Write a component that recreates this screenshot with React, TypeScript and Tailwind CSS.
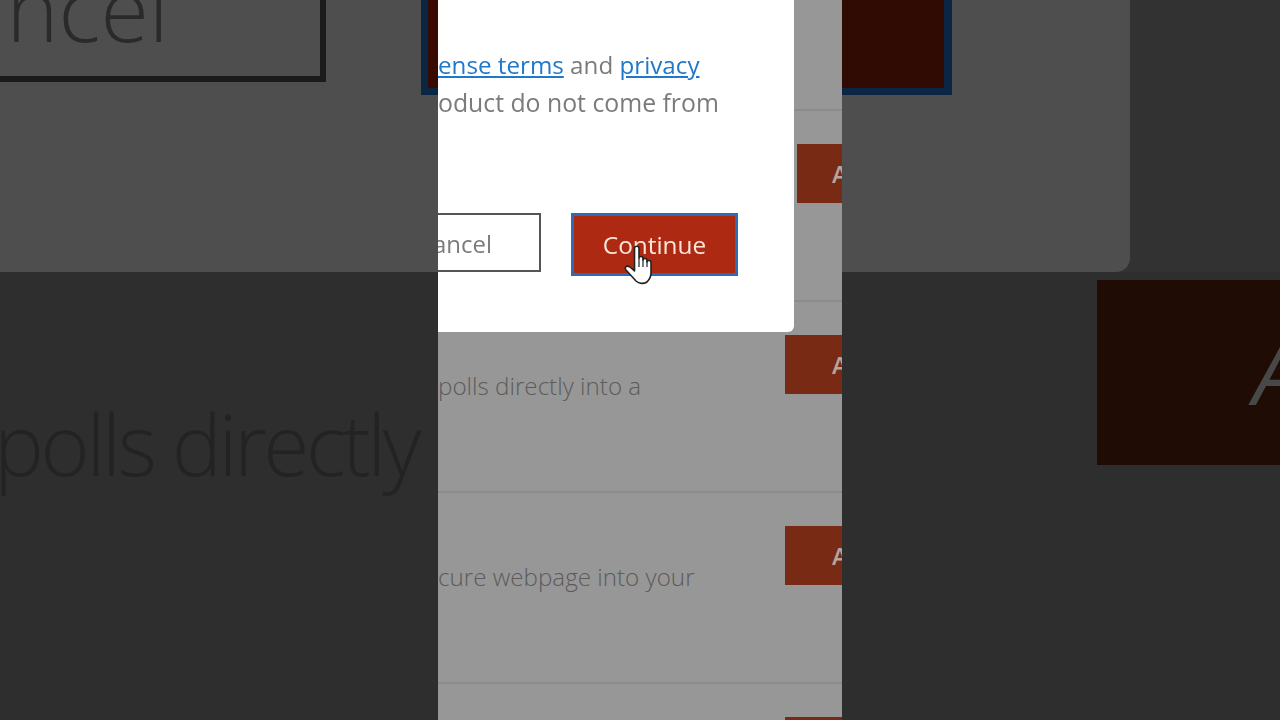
const font = "font-['Open_Sans','Noto_Sans',sans-serif]";

function HandCursor() {
  return (
    <svg width="30" height="40" viewBox="0 0 30 40" className="absolute left-[186px] top-[245px]">
      <path
        d="M10.5 3.5C10.5 .5 15 .5 15 3.5V13C15 11 19 11 19 13.5V15C19 13 23 13 23 15.5V17C23 15 27 15 27 17.5V28C27 33 25 35 23 37C20 39 15 39 12 36L2 25C0 22 3 20 6 22L10.5 26Z"
        fill="#fff"
        stroke="#222"
        strokeWidth="1.6"
        strokeLinejoin="round"
      />
      <path d="M15 13V22M19 14V22M23 16V22" stroke="#222" strokeWidth="1.2" fill="none" />
    </svg>
  );
}

function Row({ text, buttonClass }: { text?: string; buttonClass?: string }) {
  return (
    <div className="flex h-[191px] shrink-0 justify-between border-b-2 border-[#8c8c8c] pt-[33px]">
      <p className="mt-[32px] text-[24.2px] leading-[38px] font-light text-[#5c5c5c]">{text}</p>
      {buttonClass && (
        <div className={`flex h-[59px] shrink-0 items-center overflow-hidden bg-[#792a14] text-[24px] font-semibold text-[#b5a59d] ${buttonClass}`}>
          A
        </div>
      )}
    </div>
  );
}

function Modal() {
  return (
    <div className="absolute top-0 left-0 h-[332px] w-[356px] rounded-br-md bg-white pt-[46px]">
      <p className="text-[24.2px] leading-[38px] whitespace-nowrap text-[#7b7b7b] blur-[0.3px]">
        <span className="text-[#1f78c9] underline underline-offset-2">ense terms</span> and{' '}
        <span className="text-[#1f78c9] underline underline-offset-2">privacy</span>
      </p>
      <p className="text-[24.8px] leading-[36px] whitespace-nowrap text-[#7b7b7b] blur-[0.3px]">oduct do not come from</p>
      <div className="mt-[93px] flex items-start gap-[30px]">
        <div className="flex h-[59px] w-[103px] items-center overflow-hidden border-y-2 border-r-2 border-[#555] pt-[2px] text-[24px] text-[#7b7b7b]">
          <span className="-ml-[5px] blur-[0.3px]">ancel</span>
        </div>
        <div className="flex h-[63px] w-[167px] items-center justify-center border-[3px] border-[#2c6cb6] bg-[#ae2912] pt-[2px] text-[24.4px] text-[#fbe6dc]">
          <span className="blur-[0.3px]">Continue</span>
        </div>
      </div>
      <HandCursor />
    </div>
  );
}

export default function App() {
  return (
    <div className={`flex h-[720px] w-[1280px] overflow-hidden bg-[#2e2e2e] ${font}`}>
      {/* left blurred copy */}
      <div className="flex w-[438px] shrink-0 flex-col overflow-hidden">
        <div className="flex h-[272px] shrink-0 items-start justify-between bg-[#4e4e4e]">
          <div className="flex h-[82px] w-[326px] items-end overflow-hidden border-r-[6px] border-b-[6px] border-[#1b1b1b] pb-[24px] text-[88px] leading-[88px] font-light text-[#2a2a2a]">
            <span className="-ml-[40px] blur-[0.6px]">ancel</span>
          </div>
          <div className="h-[95px] w-[17px] border-b-[7px] border-l-[7px] border-[#0b2643] bg-[#370a02]" />
        </div>
        <div className="-ml-[6px] flex-1 pt-[112px] text-[84px] leading-[120px] font-light tracking-[-3.4px] whitespace-nowrap text-[#232323] blur-[0.6px]">
          polls directly
        </div>
      </div>

      {/* sharp middle column */}
      <div className="relative w-[404px] shrink-0 overflow-hidden bg-[#979797]">
        <div className="-mt-[80px] flex flex-col">
          <Row />
          <Row buttonClass="w-[45px] pl-[35px]" />
          <Row text="polls directly into a" buttonClass="w-[57px] pl-[47px]" />
          <Row text="cure webpage into your" buttonClass="w-[57px] pl-[47px]" />
          <Row buttonClass="w-[57px] pl-[47px]" />
        </div>
        <Modal />
      </div>

      {/* right blurred copy */}
      <div className="flex flex-1 flex-col overflow-hidden">
        <div className="flex h-[272px] shrink-0 bg-[#323232]">
          <div className="h-[272px] w-[288px] rounded-br-[14px] bg-[#4e4e4e]">
            <div className="h-[95px] w-[110px] border-r-[8px] border-b-[7px] border-[#0b2643] bg-[#2f0b04]" />
          </div>
        </div>
        <div className="flex flex-1 justify-end pt-[8px]">
          <div className="flex h-[185px] w-[183px] items-center overflow-hidden bg-[#1f0c05] pl-[156px] text-[84px] italic text-[#484848] blur-[0.4px]">
            A
          </div>
        </div>
      </div>
    </div>
  );
}
